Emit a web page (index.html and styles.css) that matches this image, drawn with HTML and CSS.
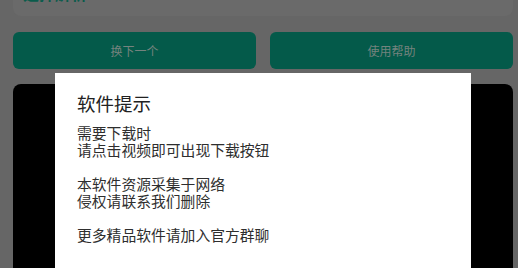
FILE: index.html
```html
<!DOCTYPE html>
<html lang="zh-CN">
<head>
<meta charset="utf-8">
<title>软件提示</title>
<link rel="stylesheet" href="styles.css">
</head>
<body>
<div class="page">
  <div class="card"><span class="card-title">选择解析</span></div>
  <div class="actions">
    <button class="btn">换下一个</button>
    <button class="btn">使用帮助</button>
  </div>
  <div class="player"></div>
</div>
<div class="dialog">
  <h2 class="dialog-title">软件提示</h2>
  <div class="dialog-body">
    <p><span class="line">需要下载时</span><span class="line">请点击视频即可出现下载按钮</span></p>
    <p><span class="line">本软件资源采集于网络</span><span class="line">侵权请联系我们删除</span></p>
    <p><span class="line">更多精品软件请加入官方群聊</span></p>
  </div>
</div>
</body>
</html>
```

FILE: styles.css
```css
html, body {
  margin: 0;
  padding: 0;
  height: 100%;
  overflow: hidden;
}
body {
  background: #666666;
  font-family: "Noto Sans CJK SC", "Noto Sans", sans-serif;
}
.page {
  padding: 0 5px 0 13px;
  display: flex;
  flex-direction: column;
}
.card {
  margin-top: -20px;
  height: 36px;
  box-sizing: border-box;
  padding: 3px 0 0 10px;
  background: #6a6a6a;
  border-radius: 8px;
}
.card-title {
  display: block;
  font-size: 16px;
  line-height: 20px;
  font-weight: bold;
  color: #0a5c4c;
}
.actions {
  margin-top: 16px;
  display: flex;
  gap: 14px;
}
.btn {
  flex: 1;
  height: 37px;
  border: 0;
  border-radius: 6px;
  background: #045a4a;
  color: #74837e;
  font-family: "Noto Sans CJK SC", sans-serif;
  font-size: 12px;
  padding: 0;
}
.player {
  margin-top: 15px;
  height: 184px;
  background: #000;
  border-radius: 8px 8px 0 0;
}
.dialog {
  position: fixed;
  left: 55px;
  top: 73px;
  width: 416px;
  height: 195px;
  box-sizing: border-box;
  background: #ffffff;
  padding: 18px 22px 0;
}
.dialog-title {
  margin: 0;
  font-size: 18.5px;
  line-height: 24px;
  font-weight: normal;
  color: #212121;
}
.dialog-body {
  margin-top: 9px;
  font-size: 14.8px;
  line-height: 17px;
  color: #2e2e2e;
}
.dialog-body p {
  margin: 0 0 17px 0;
}
.line {
  display: block;
  height: 17px;
}
```
